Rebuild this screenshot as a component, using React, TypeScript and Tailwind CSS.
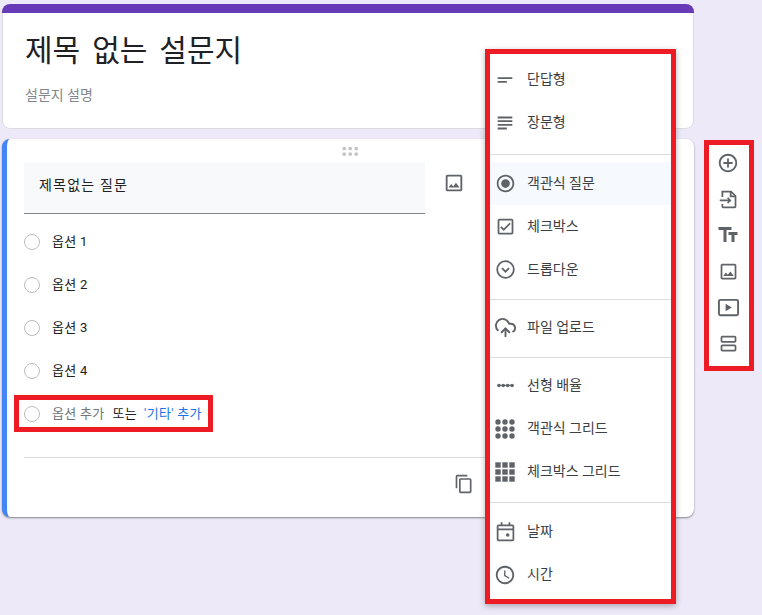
import { Fragment } from 'react';
import type { ReactNode } from 'react';
import { CloudUpload } from 'lucide-react';
import {
  MdAddCircleOutline,
  MdContentCopy,
  MdOutlineAccessTime,
  MdOutlineCheckBox,
  MdOutlineImage,
  MdOutlineViewAgenda,
  MdRadioButtonChecked,
  MdShortText,
  MdSubject,
  MdTextFields,
} from 'react-icons/md';

const font = "font-['Roboto','Noto_Sans_CJK_KR',sans-serif]";

function LinearScale() {
  return (
    <svg viewBox="0 0 24 24" className="h-[21px] w-[21px]" fill="#5f6368">
      <rect x="3" y="11.2" width="18" height="1.4" />
      <circle cx="4.5" cy="12" r="2" />
      <circle cx="9.5" cy="12" r="2" />
      <circle cx="14.5" cy="12" r="2" />
      <circle cx="19.5" cy="12" r="2" />
    </svg>
  );
}

function DotGrid() {
  const points = [0, 1, 2];
  return (
    <svg viewBox="0 0 20 20" className="h-5 w-5" fill="#5f6368">
      {points.map((y) =>
        points.map((x) => <circle key={`${x}-${y}`} cx={3 + x * 7} cy={3 + y * 7} r="2.7" />),
      )}
    </svg>
  );
}

function SquareGrid() {
  const points = [0, 1, 2];
  return (
    <svg viewBox="0 0 20 20" className="h-5 w-5" fill="#5f6368">
      {points.map((y) =>
        points.map((x) => <rect key={`${x}-${y}`} x={0.3 + x * 7} y={0.3 + y * 7} width="5.4" height="5.4" />),
      )}
    </svg>
  );
}

function ChevronCircle() {
  return (
    <svg viewBox="0 0 24 24" className="h-[21px] w-[21px]" fill="none" stroke="#5f6368" strokeWidth="2">
      <circle cx="12" cy="12" r="9.5" />
      <path d="M8 10.5l4 4 4-4" />
    </svg>
  );
}

function CalendarDot() {
  return (
    <svg viewBox="0 0 24 24" className="h-[21px] w-[21px]" fill="none" stroke="#5f6368" strokeWidth="2">
      <path d="M4 5h16a1 1 0 0 1 1 1v15a1 1 0 0 1-1 1H4a1 1 0 0 1-1-1V6a1 1 0 0 1 1-1z" />
      <path d="M3 9.5h18M7.5 1.5v4M16.5 1.5v4" />
      <circle cx="14.5" cy="16" r="2" fill="#5f6368" stroke="none" />
    </svg>
  );
}

function ImportFile() {
  return (
    <svg viewBox="0 0 24 24" className="h-[21px] w-[21px]" fill="none" stroke="#5f6368" strokeWidth="2">
      <path d="M5 9V3h10l5 5v12a1 1 0 0 1-1 1H6a1 1 0 0 1-1-1v-3" />
      <path d="M14.5 3v5.5H20" />
      <path d="M2 13h12M11 10l3 3-3 3" />
    </svg>
  );
}

function VideoBox() {
  return (
    <svg viewBox="0 0 24 24" className="h-[23px] w-[23px]" fill="none">
      <rect x="2" y="4" width="20" height="16" rx="1.5" stroke="#5f6368" strokeWidth="2" />
      <path d="M9 8.2v7.6l6.5-3.8z" fill="#5f6368" />
    </svg>
  );
}

function DragDots() {
  const xs = [0, 1, 2];
  const ys = [0, 1];
  return (
    <svg viewBox="0 0 16 9" className="h-[9px] w-4" fill="#c0c2c5">
      {ys.map((y) => xs.map((x) => <rect key={`${x}-${y}`} x={0.5 + x * 6} y={y * 5.5} width="3.4" height="3.2" rx="1" />))}
    </svg>
  );
}

type MenuItem = { label: string; icon: ReactNode; active?: boolean };

const groups: { items: MenuItem[]; top: string; bottom: string }[] = [
  {
    top: 'pt-1',
    bottom: 'pb-[10px]',
    items: [
      { label: '단답형', icon: <MdShortText size={22} color="#5f6368" /> },
      { label: '장문형', icon: <MdSubject size={22} color="#5f6368" /> },
    ],
  },
  {
    top: 'pt-[7px]',
    bottom: 'pb-2',
    items: [
      { label: '객관식 질문', icon: <MdRadioButtonChecked size={21} color="#5f6368" />, active: true },
      { label: '체크박스', icon: <MdOutlineCheckBox size={21} color="#5f6368" /> },
      { label: '드롭다운', icon: <ChevronCircle /> },
    ],
  },
  {
    top: 'pt-[6px]',
    bottom: 'pb-2',
    items: [{ label: '파일 업로드', icon: <CloudUpload size={23} color="#5f6368" strokeWidth={2} /> }],
  },
  {
    top: 'pt-[6px]',
    bottom: 'pb-[9px]',
    items: [
      { label: '선형 배율', icon: <LinearScale /> },
      { label: '객관식 그리드', icon: <DotGrid /> },
      { label: '체크박스 그리드', icon: <SquareGrid /> },
    ],
  },
  {
    top: 'pt-[7px]',
    bottom: 'pb-[3px]',
    items: [
      { label: '날짜', icon: <CalendarDot /> },
      { label: '시간', icon: <MdOutlineAccessTime size={22} color="#5f6368" /> },
    ],
  },
];

const sideTools: ReactNode[] = [
  <MdAddCircleOutline size={22} color="#5f6368" />,
  <ImportFile />,
  <MdTextFields size={24} color="#5f6368" />,
  <MdOutlineImage size={21} color="#5f6368" />,
  <VideoBox />,
  <MdOutlineViewAgenda size={21} color="#5f6368" />,
];

function Radio() {
  return <span className="mr-3 h-4 w-4 shrink-0 rounded-full border border-[#bdbdbd] bg-white" />;
}

export default function App() {
  return (
    <div className={`relative h-[615px] w-[762px] overflow-hidden bg-[#eee9f8] pl-[2px] pt-1 ${font}`}>
      <div className="flex items-start gap-[10px]">
        <div className="flex w-[692px] flex-col gap-[10px]">
          <section className="h-[125px] overflow-hidden rounded-lg bg-white shadow-[inset_0_0_0_1px_#dadce0]">
            <div className="h-[9px] bg-[#673ab7]" />
            <h1 className="ml-[23px] mt-[15px] text-[30px] leading-[46px] font-normal [word-spacing:4.5px] text-[#202124]">
              제목 없는 설문지
            </h1>
            <p className="ml-[23px] mt-[11px] text-[14px] leading-5 text-[#80868b]">설문지 설명</p>
          </section>

          <section className="relative h-[378px] rounded-lg border-l-[5px] border-[#4285f4] bg-white pl-[17px] pt-[23px] shadow-[0_1px_2px_rgba(60,64,67,0.6)]">
            <div className="absolute left-[335px] top-[8px]">
              <DragDots />
            </div>
            <div className="flex items-start">
              <div className="flex h-[52px] w-[401px] items-center border-b border-[#80868b] bg-[#f8f9fa] pb-[5px] pl-[15px] text-[14px] tracking-[1.2px] text-[#202124]">
                제목없는 질문
              </div>
              <div className="ml-[18px] mt-[10px]">
                <MdOutlineImage size={22} color="#5f6368" />
              </div>
            </div>

            <div className="mt-[6px] flex flex-col">
              {[1, 2, 3, 4].map((n) => (
                <div key={n} className="flex h-[43px] items-center text-[13px] tracking-[0.3px] text-[#202124]">
                  <Radio />
                  <span>옵션 {n}</span>
                </div>
              ))}
              <div className="relative flex h-[43px] items-center text-[13px] tracking-[0.3px]">
                <Radio />
                <span className="text-[#70757a]">옵션 추가</span>
                <span className="ml-2 text-[#202124]">또는</span>
                <span className="ml-[7px] text-[#1a73e8]">&apos;기타&apos; 추가</span>
                <div className="absolute left-[-10px] top-[3px] h-[37px] w-[199px] border-[5px] border-[#ed1c24]" />
              </div>
            </div>

            <div className="mr-[18px] mt-[22px] border-t border-[#dadce0]" />
            <div className="ml-[430px] mt-[16px] w-fit">
              <MdContentCopy size={20} color="#5f6368" />
            </div>
          </section>
        </div>

        <aside className="mt-[136px] flex h-[231px] w-[50px] flex-col items-center border-[5px] border-[#ed1c24] bg-white pr-[2px]">
          {sideTools.map((tool, i) => (
            <div key={i} className="flex h-9 shrink-0 items-center justify-center">
              {tool}
            </div>
          ))}
        </aside>
      </div>

      <div className="absolute left-[485px] top-[49px] w-[191px] border-[5px] border-[#ed1c24] bg-white shadow-[0_2px_6px_rgba(60,64,67,0.4)]">
        {groups.map((group, i) => (
          <Fragment key={i}>
            {i > 0 && <div className="h-px bg-[#dadce0]" />}
            <div className={`${group.top} ${group.bottom}`}>
              {group.items.map((item) => (
                <div
                  key={item.label}
                  className={`flex h-[43px] items-center text-[14px] text-[#3c4043] ${item.active ? 'bg-[#f6f9fe]' : ''}`}
                >
                  <span className="flex w-[37px] justify-center pr-[7px]">{item.icon}</span>
                  <span>{item.label}</span>
                </div>
              ))}
            </div>
          </Fragment>
        ))}
      </div>
    </div>
  );
}
